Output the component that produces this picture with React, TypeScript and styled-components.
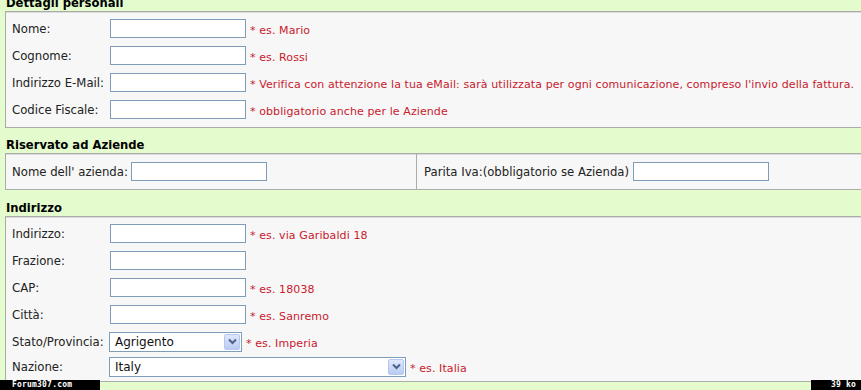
import { FC, ReactNode } from 'react';
import styled, { createGlobalStyle } from 'styled-components';

const GlobalStyle = createGlobalStyle`
    html, body {
        margin: 0;
        padding: 0;
        background: #e4fccd;
        overflow: hidden;
    }
    body {
        font-family: "DejaVu Sans", Verdana, sans-serif;
        font-size: 11.7px;
        color: #222;
    }
`;

const Page = styled.div`
    width: 861px;
    height: 390px;
    overflow: hidden;
    display: flex;
    flex-direction: column;
`;

const Sections = styled.div`
    margin-top: -14px;
    display: flex;
    flex-direction: column;
`;

const Heading = styled.div<{ h?: number }>`
    height: ${p => p.h ?? 25}px;
    box-sizing: border-box;
    padding: ${p => (p.h ?? 25) - 15}px 0 0 6px;
    line-height: 14px;
    font-size: 11.6px;
    font-weight: bold;
    color: #000;
`;

const Box = styled.div<{ pad?: string }>`
    margin-left: 5px;
    width: 870px;
    box-sizing: border-box;
    background: #f7f7f7;
    border: 1px solid #a9aca7;
    box-shadow: inset 0 1px 0 #dcdcdc;
    padding: ${p => p.pad ?? '0'};
`;

const FieldList = styled.div`
    display: flex;
    flex-direction: column;
    gap: 8px;
    padding-left: 6px;
`;

const FieldRow = styled.div<{ pull?: number }>`
    display: flex;
    align-items: center;
    height: 19px;
    margin-top: ${p => -(p.pull ?? 0)}px;
`;

const Label = styled.span<{ w?: number }>`
    white-space: nowrap;
    flex: none;
    width: ${p => (p.w ? `${p.w}px` : 'auto')};
`;

const TextInput = styled.input.attrs({ type: 'text' })<{ w?: number }>`
    flex: none;
    width: ${p => p.w ?? 136}px;
    height: 19px;
    box-sizing: border-box;
    border: 1px solid #7f9db9;
    background: #fff;
    margin: 0;
    padding: 0 3px;
    font: inherit;
`;

const Hint = styled.span`
    color: #c8202d;
    font-size: 11px;
    letter-spacing: 0.1px;
    padding: 4px 0 0 4px;
    white-space: nowrap;
`;

const SelectWrap = styled.div<{ w: number }>`
    flex: none;
    margin-left: -1px;
    width: ${p => p.w}px;
    height: 20px;
    box-sizing: border-box;
    border: 1px solid #7f9db9;
    background: #fff;
    display: flex;
    align-items: center;
    justify-content: space-between;
    padding: 1px 1px 1px 5px;
    font-size: 12px;
    color: #111;
`;

const SelectArrow = styled.span`
    width: 16px;
    height: 16px;
    box-sizing: border-box;
    border: 1px solid #b7c8f0;
    border-radius: 2px;
    background: linear-gradient(#dfe8fd, #b9cbf3);
    display: flex;
    align-items: center;
    justify-content: center;
`;

const SplitRow = styled.div`
    display: grid;
    grid-template-columns: 410px 1fr;
`;

const SplitCell = styled.div<{ divider?: boolean }>`
    display: flex;
    align-items: center;
    padding: 8px 6px 8px ${p => (p.divider ? 7 : 6)}px;
    border-left: ${p => (p.divider ? '1px solid #a9aca7' : 'none')};
`;

const Footer = styled.div`
    margin-top: -2px;
    height: 10px;
    display: flex;
    justify-content: space-between;
`;

const FooterTag = styled.span<{ w: number; right?: boolean }>`
    width: ${p => p.w}px;
    height: 10px;
    box-sizing: border-box;
    background: #000;
    color: #fff;
    font-family: "DejaVu Sans Mono", monospace;
    font-size: 8px;
    font-weight: bold;
    letter-spacing: 0.2px;
    line-height: 10px;
    padding: 0 ${p => (p.right ? '5px' : '0')} 0 ${p => (p.right ? '0' : '12px')};
    text-align: ${p => (p.right ? 'right' : 'left')};
    white-space: pre;
    overflow: hidden;
`;

const Chevron = () => (
    <svg width="9" height="7" viewBox="0 0 9 7">
        <path d="M1 1.5 L4.5 5 L8 1.5" fill="none" stroke="#4d6185" strokeWidth="2" />
    </svg>
);

const FakeSelect: FC<{ value: string; w: number }> = ({ value, w }) => (
    <SelectWrap w={w}>
        <span>{value}</span>
        <SelectArrow>
            <Chevron />
        </SelectArrow>
    </SelectWrap>
);

type Field = { label: string; hint?: string; control?: ReactNode; pull?: number };

const personal: Field[] = [
    { label: 'Nome:', hint: '* es. Mario' },
    { label: 'Cognome:', hint: '* es. Rossi' },
    {
        label: 'Indirizzo E-Mail:',
        hint: "* Verifica con attenzione la tua eMail: sarà utilizzata per ogni comunicazione, compreso l'invio della fattura."
    },
    { label: 'Codice Fiscale:', hint: '* obbligatorio anche per le Aziende' }
];

const address: Field[] = [
    { label: 'Indirizzo:', hint: '* es. via Garibaldi 18' },
    { label: 'Frazione:' },
    { label: 'CAP:', hint: '* es. 18038' },
    { label: 'Città:', hint: '* es. Sanremo' },
    { label: 'Stato/Provincia:', hint: '* es. Imperia', control: <FakeSelect value="Agrigento" w={133} /> },
    { label: 'Nazione:', hint: '* es. Italia', control: <FakeSelect value="Italy" w={297} />, pull: 2 }
];

const FieldRows: FC<{ fields: Field[] }> = ({ fields }) => (
    <FieldList>
        {fields.map(f => (
            <FieldRow key={f.label} pull={f.pull}>
                <Label w={98}>{f.label}</Label>
                {f.control ?? <TextInput />}
                {f.hint && <Hint>{f.hint}</Hint>}
            </FieldRow>
        ))}
    </FieldList>
);

export default function App() {
    return (
        <Page>
            <GlobalStyle />
            <Sections>
                <Heading>Dettagli personali</Heading>
                <Box pad="7px 0 8px">
                    <FieldRows fields={personal} />
                </Box>

                <Heading>Riservato ad Aziende</Heading>
                <Box>
                    <SplitRow>
                        <SplitCell>
                            <Label w={119}>Nome dell' azienda:</Label>
                            <TextInput />
                        </SplitCell>
                        <SplitCell divider>
                            <Label w={209}>Parita Iva:(obbligatorio se Azienda)</Label>
                            <TextInput />
                        </SplitCell>
                    </SplitRow>
                </Box>

                <Heading h={26}>Indirizzo</Heading>
                <Box pad="7px 0 5px">
                    <FieldRows fields={address} />
                </Box>
            </Sections>
            <Footer>
                <FooterTag w={100}>Forum307.com</FooterTag>
                <FooterTag w={50} right>39 ko</FooterTag>
            </Footer>
        </Page>
    );
}
